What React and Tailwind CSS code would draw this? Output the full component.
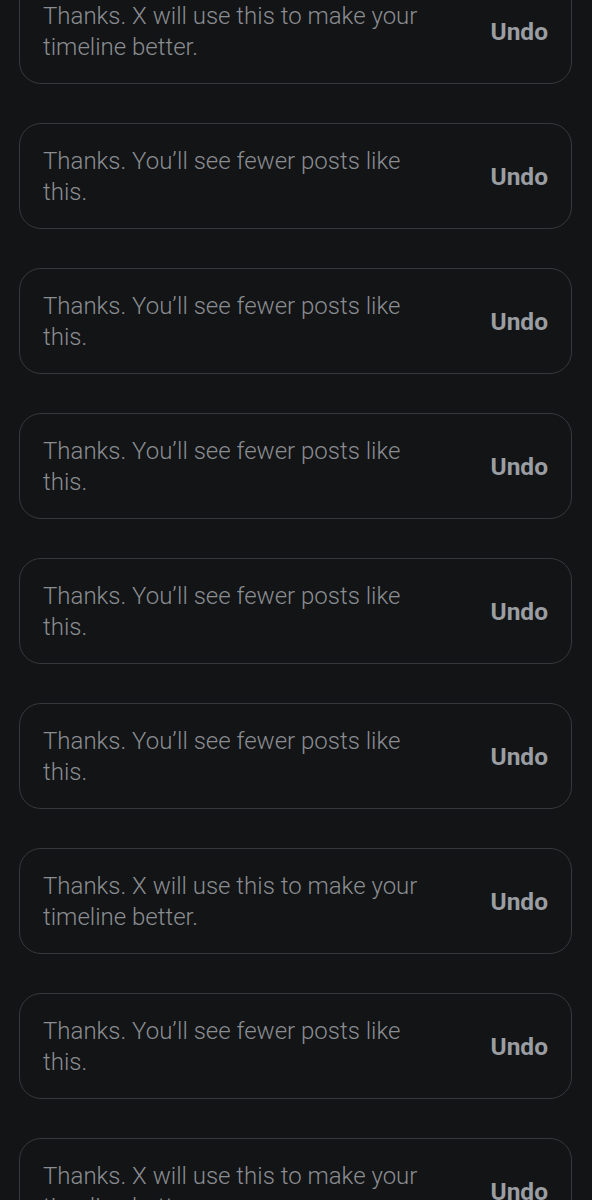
import React from "react";

const A = "Thanks. X will use this to make your timeline better.";
const B = "Thanks. You’ll see fewer posts like this.";
const items = [A, B, B, B, B, B, A, B, A];

export default function App() {
  return (
    <div
      className="w-[592px] h-[1200px] overflow-hidden bg-[#131416]"
      style={{ fontFamily: "Roboto, 'Noto Sans', sans-serif" }}
    >
      <div className="mt-[-22px] flex flex-col gap-[39px] pl-[19px] pr-[20px]">
        {items.map((t, i) => (
          <div
            key={i}
            className="h-[106px] flex items-center rounded-[22px] border border-[#36383b] pl-[23px] pr-[23px]"
          >
            <div className="w-[400px] text-[24px] leading-[31px] font-light text-[#8a8d91] pt-[1px]">{t}</div>
            <div className="ml-auto text-[24.5px] font-bold text-[#9a9da1] pt-[2px]">Undo</div>
          </div>
        ))}
      </div>
    </div>
  );
}
